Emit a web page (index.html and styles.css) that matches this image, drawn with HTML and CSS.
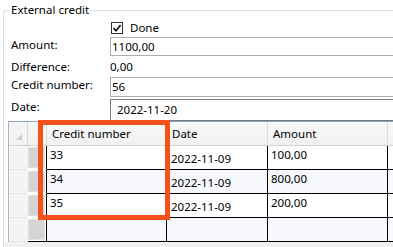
FILE: index.html
```html
<!DOCTYPE html>
<html lang="en">
<head>
    <meta charset="UTF-8">
    <meta name="viewport" content="width=device-width, initial-scale=1.0">
    <title>External credit</title>
    <link rel="stylesheet" href="styles.css">
</head>
<body>
    <fieldset class="credit-box">
        <legend>External credit</legend>
        <div class="form">
            <span></span>
            <label class="check">
                <span class="box">
                    <svg width="10" height="10" viewBox="0 0 10 10"><path d="M1.5 5.2 L4 7.8 L8.6 2" fill="none" stroke="#111" stroke-width="1.7"/></svg>
                </span>
                Done
            </label>
            <span class="label">Amount:</span>
            <div class="input">1100,00</div>
            <span class="label diff">Difference:</span>
            <span class="value">0,00</span>
            <span class="label">Credit number:</span>
            <div class="input tall">56</div>
            <span class="label">Date:</span>
            <div class="input date">2022-11-20</div>
        </div>
        <div class="table">
            <div class="head corner"><span class="tri"></span></div>
            <div class="head"></div>
            <div class="head">Credit number</div>
            <div class="head">Date</div>
            <div class="head">Amount</div>
            <div class="head"></div>

            <div class="side"></div>
            <div class="mark"><span></span></div>
            <div class="cell">33</div>
            <div class="cell mid">2022-11-09</div>
            <div class="cell">100,00</div>
            <div class="cell"></div>

            <div class="side"></div>
            <div class="mark"><span></span></div>
            <div class="cell alt">34</div>
            <div class="cell alt mid">2022-11-09</div>
            <div class="cell alt">800,00</div>
            <div class="cell alt"></div>

            <div class="side"></div>
            <div class="mark"><span></span></div>
            <div class="cell">35</div>
            <div class="cell mid">2022-11-09</div>
            <div class="cell">200,00</div>
            <div class="cell"></div>

            <div class="side"></div>
            <div class="mark last"><span></span></div>
            <div class="cell alt"></div>
            <div class="cell alt"></div>
            <div class="cell alt"></div>
            <div class="cell alt"></div>

            <div class="highlight"></div>
        </div>
        <div class="strip"></div>
    </fieldset>
</body>
</html>
```

FILE: styles.css
```css
body {
    margin: 0;
    background-color: white;
    font-family: "Noto Sans", sans-serif;
    font-size: 11.5px;
    color: black;
    overflow: hidden;
}

/* group box runs off the right and bottom of the window */
.credit-box {
    box-sizing: border-box;
    margin: 2px 0 0 3px;
    padding: 0;
    width: 390px;
    border: 1px solid #d5dfe5;
    border-right: none;
    border-bottom: none;
    border-top-left-radius: 3px;
}

.credit-box legend {
    margin-left: 5px;
    padding: 0 2px;
    line-height: 16px;
}

.form {
    display: grid;
    grid-template-columns: 99px 1fr;
    grid-template-rows: 19px 19px 21px 22px 22px;
    padding-left: 7px;
    line-height: 16px;
}

.label {
    align-self: start;
}

.label.diff,
.value {
    align-self: center;
}

.check {
    display: flex;
    align-items: center;
    gap: 7px;
    margin-left: 1px;
}

.box {
    display: flex;
    align-items: center;
    justify-content: center;
    width: 12px;
    height: 12px;
    box-sizing: border-box;
    border: 1px solid #333;
    background-color: white;
}

.input {
    box-sizing: border-box;
    height: 19px;
    padding: 0 1px;
    border: 1px solid #abadb3;
    border-right: none;
    line-height: 17px;
}

.input.tall {
    height: 20px;
    line-height: 18px;
}

.input.date {
    height: 22px;
    padding-left: 6px;
    border-color: #7a7a7a;
    line-height: 20px;
}

.table {
    position: relative;
    display: grid;
    grid-template-columns: 19px 19px 120px 101px 120px 1fr;
    grid-auto-rows: 24px;
    margin-left: 4px;
    border-top: 1px solid #8fa6bf;
    border-left: 1px solid #b4b4b4;
}

.head {
    box-sizing: border-box;
    display: flex;
    align-items: center;
    padding-left: 5px;
    background: linear-gradient(#f9f9f9, #f1f1f1);
    border-right: 1px solid #dadada;
    border-bottom: 1px solid #d2d2d2;
}

.corner {
    position: relative;
    background: #f3f3f3;
}

.tri {
    position: absolute;
    right: 5px;
    bottom: 5px;
    width: 0;
    height: 0;
    border-left: 6px solid transparent;
    border-bottom: 6px solid #cfcfcf;
}

.side {
    background-color: #f4f4f4;
    border-bottom: 1px solid #e6e6e6;
}

.mark {
    box-sizing: border-box;
    padding: 1px 1px 1px 0;
    border-right: 1px solid black;
    border-bottom: 1px solid white;
}

.mark.last {
    border-bottom-color: black;
}

.mark span {
    display: block;
    height: 100%;
    box-sizing: border-box;
    background-color: #d4d4d4;
    border: 1px solid #e2e2e2;
}

.cell {
    box-sizing: border-box;
    padding: 1px 3px;
    line-height: 16px;
    border-right: 1px solid black;
    border-bottom: 1px solid black;
}

.cell.mid {
    display: flex;
    align-items: center;
    padding: 2px 4px 0;
}

.alt {
    background-color: #f6f8fd;
}

.highlight {
    position: absolute;
    left: 29px;
    top: -2px;
    width: 132px;
    height: 100px;
    box-sizing: border-box;
    border: 5px solid #f4511b;
}

.strip {
    height: 5px;
    background-color: #f0f0f0;
}
```
